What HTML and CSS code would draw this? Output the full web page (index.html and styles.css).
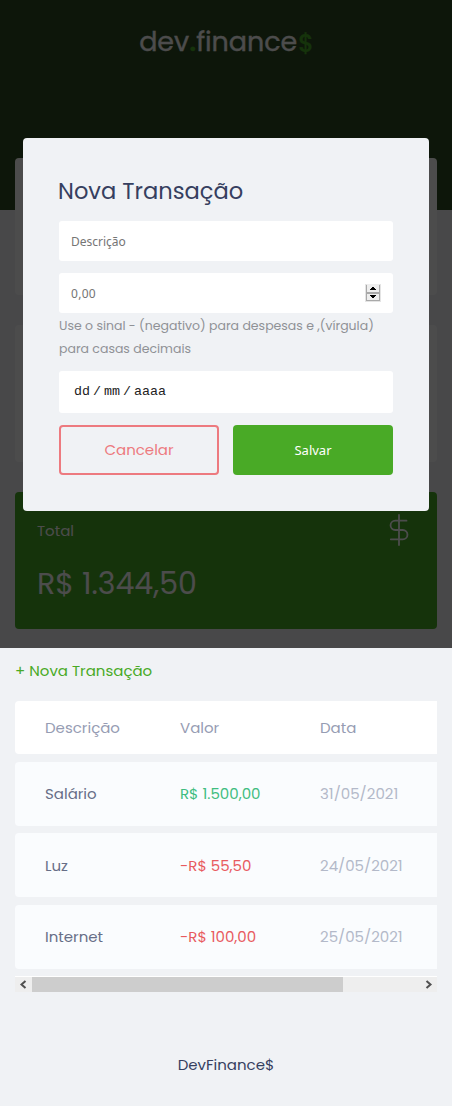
FILE: index.html
```html
<!DOCTYPE html>
<html lang="pt-br">
<head>
<meta charset="utf-8">
<title>dev.finance$</title>
<link rel="stylesheet" href="styles.css">
</head>
<body>
<header class="header"><h1 class="logo"><span class="logo-word">dev<span class="green">.</span>finance</span><span class="logo-sign">$</span></h1></header>
<main class="container">
  <section class="balance">
    <div class="card"></div>
    <div class="card"></div>
    <div class="card total">
      <div class="card-head"><span class="card-label">Total</span>
        <svg class="dollar" width="20" height="32" viewBox="0 0 20 32" fill="none" stroke="#fff" stroke-width="1.8" stroke-linecap="round"><path d="M10 1v30M17.5 6.7H6.2a4.65 4.65 0 0 0 0 9.3h7.6a4.65 4.65 0 0 1 0 9.3H1.8"/></svg>
      </div>
      <p class="amount">R$ 1.344,50</p>
    </div>
  </section>
  <a class="new">+ Nova Transação</a>
  <section class="table">
    <div class="row head"><span>Descrição</span><span>Valor</span><span>Data</span></div>
    <div class="row"><span class="name">Salário</span><span class="income">R$ 1.500,00</span><span class="date">31/05/2021</span></div>
    <div class="row"><span class="name">Luz</span><span class="expense">-R$ 55,50</span><span class="date">24/05/2021</span></div>
    <div class="row"><span class="name">Internet</span><span class="expense">-R$ 100,00</span><span class="date">25/05/2021</span></div>
  </section>
  <div class="scrollbar">
    <svg class="arrow" width="17" height="15" viewBox="0 0 17 15" fill="none" stroke="#505050" stroke-width="2"><path d="M10.5 4L6.5 7.5l4 3.5"/></svg>
    <div class="thumb"></div>
    <svg class="arrow" width="17" height="15" viewBox="0 0 17 15" fill="none" stroke="#505050" stroke-width="2"><path d="M6.5 4l4 3.5-4 3.5"/></svg>
  </div>
</main>
<footer class="footer">DevFinance$</footer>
<div class="overlay">
  <div class="modal">
    <h2 class="title">Nova Transação</h2>
    <div class="field"><span class="ph">Descrição</span></div>
    <div class="field"><span class="ph number">0,00</span>
      <svg class="spinner" width="16" height="18" viewBox="0 0 16 18"><path fill="#e4e4e4" d="M0 0h16v18H0z"/><path fill="#a9a9a9" d="M1 1h14v16H1z"/><path fill="#eee" d="M2 0h12v8H2zM2 10h12v6H2z"/><path d="M7 3h2v1h1v1h1v1H5V5h1V4h1zM5 11h6v1h-1v1H9v1H7v-1H6v-1H5z"/></svg>
    </div>
    <p class="help">Use o sinal - (negativo) para despesas e ,(vírgula)<br>para casas decimais</p>
    <div class="field datefield"><span>dd</span><span>/</span><span>mm</span><span>/</span><span>aaaa</span></div>
    <div class="actions"><a class="btn cancel">Cancelar</a><button class="btn save">Salvar</button></div>
  </div>
</div>
</body>
</html>
```
FILE: styles.css
```css
* { box-sizing: border-box; margin: 0; padding: 0; }
body { position: relative; width: 452px; height: 1106px; overflow: hidden; background: #f0f2f5; font-family: Poppins, Inter, sans-serif; font-size: 15px; color: #363f5f; }
.header { height: 210px; background: #2d4a22; padding-top: 24px; }
.logo { display: flex; justify-content: center; padding-left: 1px; font-size: 27px; line-height: 36px; font-weight: 400; color: #fff; -webkit-text-stroke: .3px; }
.logo-word { letter-spacing: -0.05px; }
.green { color: #49aa26; font-weight: 600; }
.logo-sign { margin-left: 1px; color: #49aa26; font-size: 24px; line-height: 40px; font-weight: 500; }
.container { padding: 0 15px; margin-top: -52px; }
.balance { display: grid; gap: 30px; }
.card { height: 137px; border-radius: 4px; background: #fff; padding: 22px; }
.total { background: #49aa26; color: #fff; }
.card-head { display: flex; justify-content: space-between; height: 34px; padding-right: 6px; }
.card-label { line-height: 34px; }
.amount { font-size: 30px; line-height: 48px; margin-top: 12px; }
.new { display: block; margin-top: 31px; line-height: 22px; color: #49aa26; }
.table { display: grid; gap: 8px; margin-top: 19px; }
.row { display: grid; grid-template-columns: 135px 140px 1fr; align-items: center; height: 64px; padding: 0 0 1px 30px; border-radius: 4px 0 0 4px; background: #fafcfe; white-space: nowrap; }
.row:nth-child(2) { margin-bottom: -1px; }
.row:nth-child(3) { padding-bottom: 0; }
.head { height: 53px; padding-bottom: 0; background: #fff; color: #969cb3; }
.name { color: #676e87; }
.income { color: #3fbd80; }
.expense { color: #e85a5f; }
.date { color: #b3b9c9; }
.scrollbar { display: flex; height: 16px; margin-top: 7px; border-top: 1px solid #fff; background: #eee; }
.thumb { width: 311px; margin-right: auto; background: #cdcdcd; }
.footer { text-align: center; margin-top: 61px; line-height: 24px; }
.overlay { position: absolute; top: 0; left: 0; width: 452px; height: 648px; background: rgba(0,0,0,.7); padding: 138px 23px 0; }
.modal { height: 373px; border-radius: 4px; background: #f0f2f5; padding: 35px 36px 0; }
.title { margin-left: -1px; font-size: 22.6px; line-height: 36px; font-weight: 400; }
.field { display: flex; align-items: center; height: 40px; margin-top: 12px; padding: 0 12px; border-radius: 3px; background: #fff; }
.ph { font: 12px "Noto Sans", sans-serif; color: #757575; }
.number { letter-spacing: .3px; }
.spinner { margin-left: auto; }
.help { font-size: 12.5px; line-height: 23px; padding-top: 1px; color: #8f9196; white-space: nowrap; }
.datefield { height: 42px; margin-top: 11px; padding-left: 15px; padding-bottom: 1px; gap: 3px; font: 13.33px "Courier New", "Liberation Mono", monospace; color: #222; }
.actions { display: grid; grid-template-columns: 1fr 1fr; gap: 14px; margin-top: 12px; }
.btn { display: flex; align-items: center; justify-content: center; height: 50px; border-radius: 4px; }
.cancel { padding-bottom: 1px; border: 2px solid #ed7a7f; color: #ed7a7f; }
.save { border: 0; background: #49aa26; color: #fff; font: 13px "Noto Sans", sans-serif; }
```
